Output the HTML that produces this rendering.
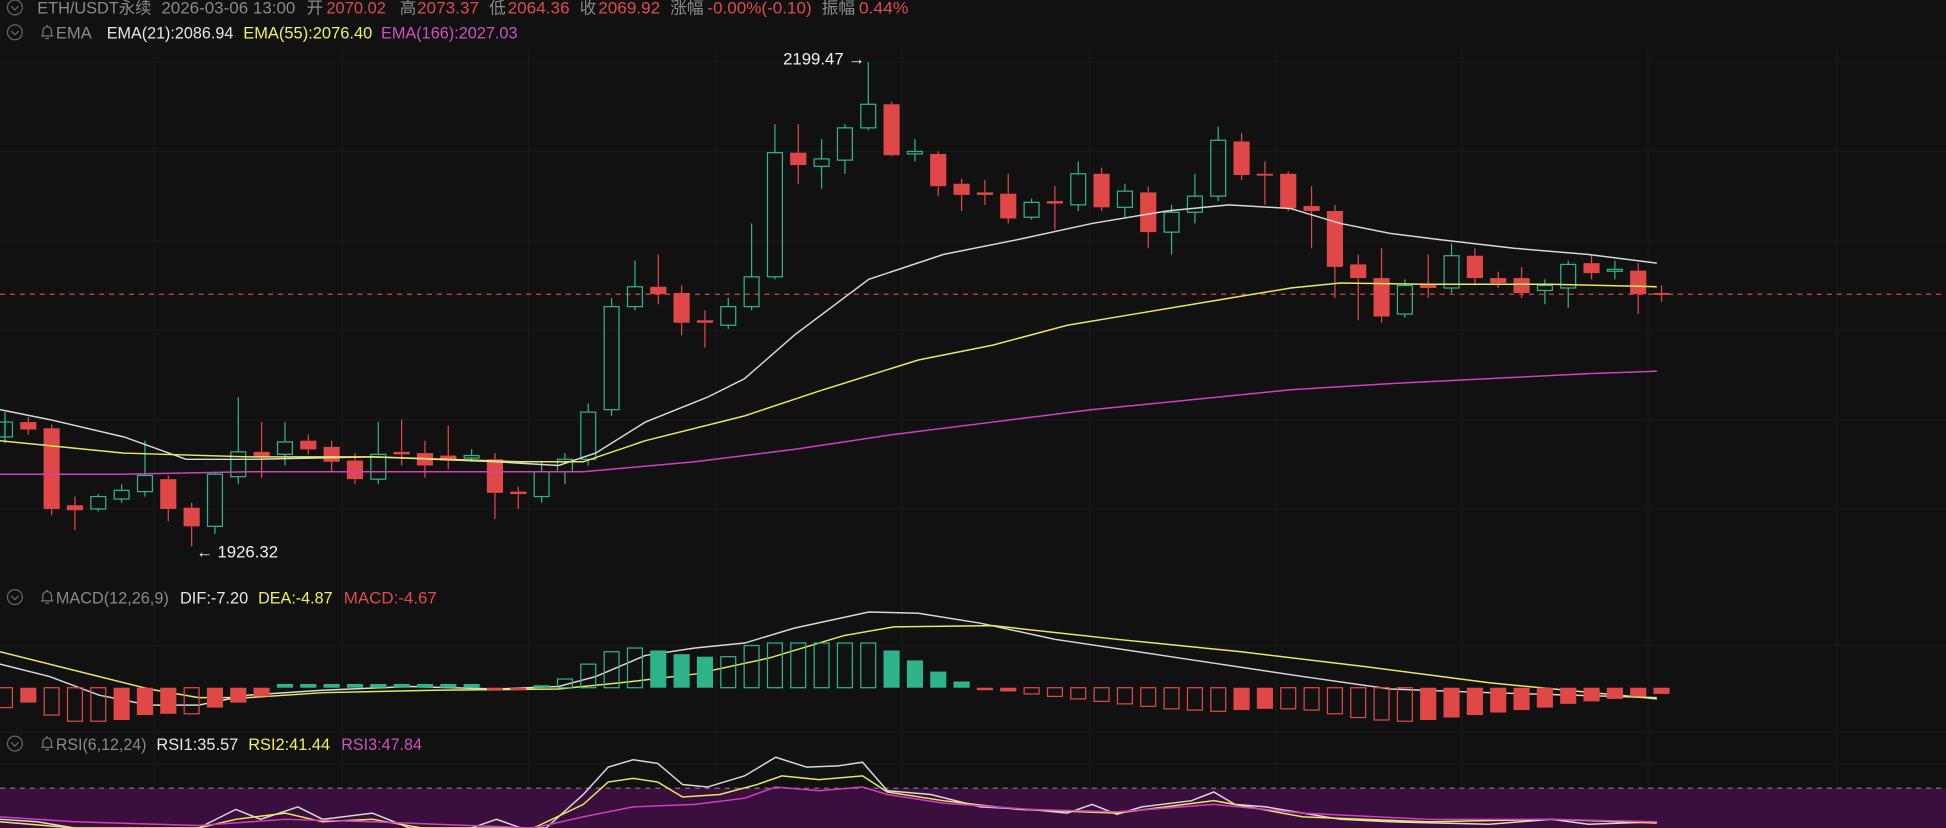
<!DOCTYPE html>
<html><head><meta charset="utf-8"><style>
html,body{margin:0;padding:0;background:#111112;width:1946px;height:828px;overflow:hidden}
svg{display:block}
text{font-family:"Liberation Sans","Noto Sans CJK SC",sans-serif}
</style></head><body>
<svg id="s" width="1946" height="828" viewBox="0 0 1568 667" preserveAspectRatio="none" xmlns="http://www.w3.org/2000/svg">
<rect width="1568" height="667" fill="#111112"/>
<g id="grid" stroke="#19191b" stroke-width="1"></g>
<rect x="0" y="635" width="1568" height="32" fill="#3a0f3e"/>
<line x1="0" y1="635" x2="1568" y2="635" stroke="#777" stroke-dasharray="4,4" stroke-width="1"/>
<line x1="0" y1="237" x2="1568" y2="237" stroke="#d04848" stroke-dasharray="4,4" stroke-width="1"/>
<g id="candles"></g>
<g id="lines" fill="none" stroke-width="1.2"></g>
<g id="macd"></g>
<g id="bells" fill="none" stroke="#777" stroke-width="1"></g>
<g font-size="13.5" lengthAdjust="spacingAndGlyphs">
<circle cx="12" cy="6" r="6" fill="none" stroke="#666"/><path d="M9 5l3 3 3-3" fill="none" stroke="#666"/>
<text y="11" fill="#8a8a8a">
<tspan x="30" textLength="92" lengthAdjust="spacingAndGlyphs">ETH/USDT永续</tspan>
<tspan x="130" textLength="108" lengthAdjust="spacingAndGlyphs">2026-03-06 13:00</tspan>
<tspan x="247">开</tspan><tspan x="263" fill="#e04b4b" textLength="48" lengthAdjust="spacingAndGlyphs">2070.02</tspan>
<tspan x="322">高</tspan><tspan x="336" fill="#e04b4b" textLength="50" lengthAdjust="spacingAndGlyphs">2073.37</tspan>
<tspan x="394">低</tspan><tspan x="409" fill="#e04b4b" textLength="50" lengthAdjust="spacingAndGlyphs">2064.36</tspan>
<tspan x="467">收</tspan><tspan x="482" fill="#e04b4b" textLength="50" lengthAdjust="spacingAndGlyphs">2069.92</tspan>
<tspan x="540">涨幅</tspan><tspan x="570" fill="#e04b4b" textLength="84" lengthAdjust="spacingAndGlyphs">-0.00%(-0.10)</tspan>
<tspan x="662">振幅</tspan><tspan x="692" fill="#e04b4b" textLength="40" lengthAdjust="spacingAndGlyphs">0.44%</tspan>
</text>
<circle cx="12" cy="26" r="6" fill="none" stroke="#666"/><path d="M9 25l3 3 3-3" fill="none" stroke="#666"/>
<text x="45" y="31" fill="#8a8a8a" textLength="29" lengthAdjust="spacingAndGlyphs">EMA</text>
<text x="86" y="31" fill="#e6e6e6" textLength="102" lengthAdjust="spacingAndGlyphs">EMA(21):2086.94</text>
<text x="196" y="31" fill="#f0f060" textLength="104" lengthAdjust="spacingAndGlyphs">EMA(55):2076.40</text>
<text x="307" y="31" fill="#d050c0" textLength="110" lengthAdjust="spacingAndGlyphs">EMA(166):2027.03</text>
<text x="631" y="52" fill="#f0f0f0">2199.47 →</text>
<text x="158" y="449" fill="#f0f0f0">← 1926.32</text>
<circle cx="12" cy="481" r="6" fill="none" stroke="#666"/><path d="M9 480l3 3 3-3" fill="none" stroke="#666"/>
<text x="45" y="486" fill="#8a8a8a" textLength="91" lengthAdjust="spacingAndGlyphs">MACD(12,26,9)</text>
<text x="145" y="486" fill="#e6e6e6" textLength="55" lengthAdjust="spacingAndGlyphs">DIF:-7.20</text>
<text x="208" y="486" fill="#f0f060" textLength="60" lengthAdjust="spacingAndGlyphs">DEA:-4.87</text>
<text x="277" y="486" fill="#e04b4b" textLength="75" lengthAdjust="spacingAndGlyphs">MACD:-4.67</text>
<circle cx="12" cy="599" r="6" fill="none" stroke="#666"/><path d="M9 598l3 3 3-3" fill="none" stroke="#666"/>
<text x="45" y="604" fill="#8a8a8a" textLength="73" lengthAdjust="spacingAndGlyphs">RSI(6,12,24)</text>
<text x="126" y="604" fill="#e6e6e6" textLength="66" lengthAdjust="spacingAndGlyphs">RSI1:35.57</text>
<text x="200" y="604" fill="#f0f060" textLength="66" lengthAdjust="spacingAndGlyphs">RSI2:41.44</text>
<text x="275" y="604" fill="#d050c0" textLength="65" lengthAdjust="spacingAndGlyphs">RSI3:47.84</text>
</g>
</svg>
<script>
var NS="http://www.w3.org/2000/svg";
function el(p,t,a){var e=document.createElementNS(NS,t);for(var k in a)e.setAttribute(k,a[k]);p.appendChild(e);return e;}
var B=document.getElementById('bells');
[26,481,599].forEach(function(cy){el(B,'path',{d:'M33 '+(cy+3)+'h10M34.5 '+(cy+3)+'v-4a3.5 3.5 0 0 1 7 0v4M38 '+(cy-4.5)+'v-1.5M36.5 '+(cy+5)+'h3'});});
var G=document.getElementById('grid');
[124,276,426,577,727,878,1028,1178,1328,1480].forEach(function(x){el(G,'line',{x1:x,y1:40,x2:x,y2:667});});
[50,122,194,266,338,410,520,590,615].forEach(function(y){el(G,'line',{x1:0,y1:y,x2:1568,y2:y});});
var R="#e04848",GR="#2fb38a";
var C=[[352,340,357,332],[340,346,336,350],[345,410,342,415],[407,411,400,427],[410,400,398,412],[402,395,390,405],[396,383,355,400],[386,410,383,420],[409,424,405,440],[424,382,380,430],[384,364,320,390],[364,368,340,385],[366,356,340,375],[355,362,350,366],[360,372,355,380],[371,386,365,390],[386,366,340,390],[364,366,338,375],[365,375,355,385],[367,371,343,378],[369,367,362,372],[370,397,365,418],[396,398,392,410],[400,380,372,405],[380,370,365,390],[370,332,325,375],[330,247,240,335],[247,231,210,250],[231,237,205,245],[236,260,230,270],[258,260,250,280],[262,247,240,265],[247,223,180,250],[223,123,100,225],[123,133,100,148],[134,128,112,152],[129,103,100,140],[103,84,50,105],[84,125,82,126],[124,122,112,130],[124,150,122,158],[148,157,144,170],[155,157,145,165],[156,176,140,180],[175,163,160,177],[162,164,150,185],[165,140,130,170],[140,167,135,170],[167,154,148,175],[155,187,150,200],[187,171,165,205],[171,158,140,180],[158,113,102,162],[114,141,107,145],[140,141,130,165],[140,168,138,170],[166,170,150,200],[170,215,165,240],[213,224,205,258],[224,255,200,260],[253,230,225,256],[229,232,205,240],[232,206,196,236],[206,224,200,230],[224,228,219,232],[224,236,215,240],[234,230,225,245],[232,213,210,248],[212,220,205,225],[218,217,210,225],[218,237,212,253],[236,237,230,243]];
var CG=document.getElementById('candles');
C.forEach(function(c,i){var x=4+i*18.8,o=c[0],cl=c[1],up=cl<o,col=up?GR:R;
var t=Math.min(o,cl),b=Math.max(o,cl);if(b-t<1.5){b=t+1.5;}
el(CG,'line',{x1:x,y1:c[2],x2:x,y2:t,stroke:col,'stroke-width':1});
el(CG,'line',{x1:x,y1:b,x2:x,y2:c[3],stroke:col,'stroke-width':1});
if(up)el(CG,'rect',{x:x-6,y:t,width:12,height:b-t,fill:'none',stroke:col,'stroke-width':1});
else el(CG,'rect',{x:x-6.5,y:t,width:13,height:b-t,fill:col});});
var L=document.getElementById('lines');
function pl(pts,col){el(L,'polyline',{points:pts.map(function(p){return p.join(',')}).join(' '),stroke:col});}
pl([[0,330],[40,338],[100,352],[150,370],[200,370],[300,368],[400,372],[450,375],[480,365],[520,340],[570,320],[600,305],[640,270],[700,225],[760,205],[820,193],[880,180],[940,170],[990,165],[1040,168],[1080,180],[1120,188],[1160,193],[1220,200],[1280,205],[1335,212]],"#d8d8d8");
pl([[0,355],[100,365],[200,368],[300,368],[420,372],[470,372],[520,355],[600,335],[660,315],[740,290],[800,278],[860,262],[920,252],[980,242],[1040,232],[1080,228],[1150,229],[1250,229],[1335,231]],"#e8e85a");
pl([[0,382],[100,382],[200,380],[300,380],[400,380],[470,380],[560,372],[640,362],[720,350],[800,340],[880,330],[960,322],[1040,314],[1120,309],[1200,305],[1280,301],[1335,299]],"#d040c0");
var M=[-16,-12,-22,-27,-27,-26,-22,-21,-21,-16,-12,-7,3,3,3,3,3,3,3,3,3,-2,-2,2,7,19,29,32,30,27,25,25,34,36,36,36,36,36,30,22,13,5,-2,-3,-5,-7,-9,-11,-13,-15,-17,-18,-19,-18,-17,-17,-18,-21,-24,-26,-27,-26,-24,-22,-20,-18,-16,-13,-11,-9,-7,-5];
var MG=document.getElementById('macd'),Z=554;
M.forEach(function(v,i){var x=4+i*18.8,col=v>=0?GR:R,p=i?Math.abs(M[i-1]):0,h=Math.max(Math.abs(v),2),y=v>=0?Z-h:Z;
if(Math.abs(v)>=p&&Math.abs(v)>4)el(MG,'rect',{x:x-6,y:y,width:12,height:h,fill:'none',stroke:col,'stroke-width':1});
else el(MG,'rect',{x:x-6.5,y:y,width:13,height:h,fill:col});});
pl([[0,535],[40,545],[80,560],[120,568],[160,568],[200,560],[260,556],[330,553],[400,555],[450,553],[480,545],[520,528],[560,522],[600,518],[640,506],[700,493],[740,494],[790,502],[850,515],[950,530],[1050,545],[1120,555],[1200,558],[1335,562]],"#d8d8d8");
pl([[0,525],[60,540],[120,555],[160,562],[200,562],[260,558],[350,556],[450,555],[500,550],[560,543],[620,530],[680,512],[720,505],[800,504],[900,515],[1000,525],[1100,537],[1200,550],[1335,563]],"#e8e85a");
pl([[0,660],[30,662],[60,667],[160,667],[190,652],[210,660],[240,650],[260,660],[300,655],[330,667],[380,667],[400,660],[420,667],[440,667],[470,640],[490,618],[510,612],[530,615],[550,632],[570,634],[600,625],[625,610],[650,618],[675,617],[695,614],[715,637],[750,640],[790,650],[830,652],[860,655],[880,648],[900,656],[920,650],[960,645],[978,638],[995,648],[1020,650],[1050,655],[1080,660],[1120,662],[1200,664],[1250,660],[1280,664],[1335,662]],"#d8d8d8");
pl([[0,662],[60,667],[160,667],[190,660],[230,655],[260,662],[300,660],[340,667],[430,667],[470,648],[490,630],[510,627],[530,630],[550,642],[580,640],[610,632],[630,625],[660,628],[695,625],[715,638],[760,645],[820,652],[900,655],[978,645],[1050,658],[1150,662],[1250,660],[1335,663]],"#e8e85a");
pl([[0,658],[60,662],[160,665],[230,660],[300,662],[430,667],[470,658],[510,650],[560,648],[600,643],[625,634],[660,637],[695,634],[715,640],[760,647],[830,652],[900,654],[978,648],[1050,655],[1150,660],[1250,660],[1335,662]],"#d040c0");
</script>
</body></html>
